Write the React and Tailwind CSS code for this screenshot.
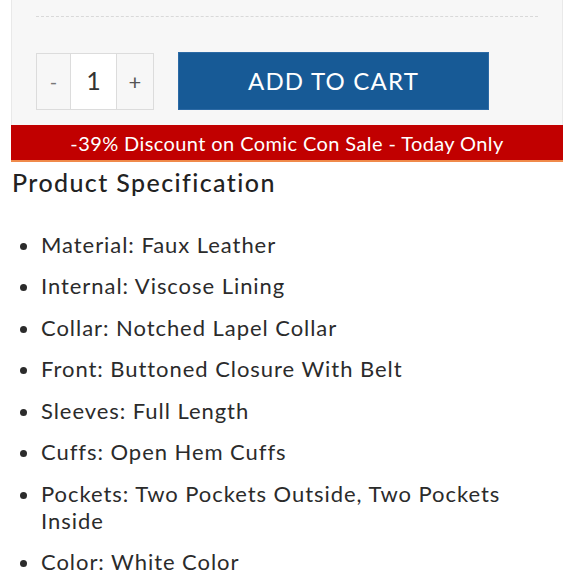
export default function App() {
  const specs = [
    'Material: Faux Leather',
    'Internal: Viscose Lining',
    'Collar: Notched Lapel Collar',
    'Front: Buttoned Closure With Belt',
    'Sleeves: Full Length',
    'Cuffs: Open Hem Cuffs',
    'Pockets: Two Pockets Outside, Two Pockets Inside',
    'Color: White Color',
  ]

  return (
    <div
      className="w-[580px] h-[580px] overflow-hidden bg-white text-[#222]"
      style={{ fontFamily: 'Lato, "Noto Sans", sans-serif' }}
    >
      <div className="ml-[11px] w-[552px]">
        <div className="bg-[#f7f7f7] border-x border-[#e9e9e9] h-[125px] pt-[16px]">
          <div className="mx-[24px] border-t border-dashed border-[#d9d9d9]" />
          <div className="flex items-center mt-[35px] pl-[24px]">
            <div className="flex h-[57px] border border-[#dcdcdc]">
              <div className="w-[33px] flex items-center justify-center text-[#777] text-[20px]">-</div>
              <div className="w-[47px] bg-white border-x border-[#dcdcdc] flex items-center justify-center text-[25px] text-[#333]">
                1
              </div>
              <div className="w-[36px] flex items-center justify-center text-[#555] text-[22px]">+</div>
            </div>
            <button
              type="button"
              className="ml-[24px] w-[311px] h-[58px] bg-[#175a96] text-white text-[24px] tracking-[1.2px] border border-[#2c6aa5]"
            >
              ADD TO CART
            </button>
          </div>
        </div>
        <div className="h-[37px] bg-[#c10000] border-b-2 border-[#f08a4b] flex items-center justify-center text-white text-[20px] tracking-[0.4px]">
          -39% Discount on Comic Con Sale - Today Only
        </div>
      </div>

      <h2 className="ml-[12px] mt-[2px] text-[25px] font-medium text-[#222] tracking-[1.4px]">Product Specification</h2>

      <ul className="mt-[29px] pl-[41px] pr-[38px] list-disc text-[22px] leading-[27px] tracking-[0.95px] text-[#2b2b2b]">
        {specs.map((s) => (
          <li key={s} className="mb-[14.5px] pl-0">
            {s}
          </li>
        ))}
      </ul>
    </div>
  )
}
